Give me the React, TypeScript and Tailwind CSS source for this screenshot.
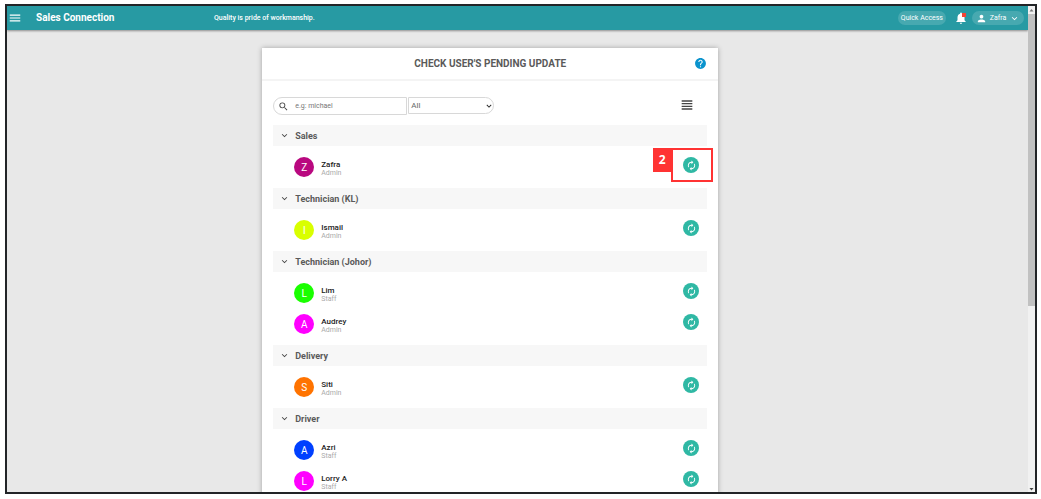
import {
  MdAutorenew,
  MdExpandMore,
  MdHelp,
  MdMenu,
  MdNotifications,
  MdPerson,
  MdSearch,
  MdViewHeadline,
} from 'react-icons/md';

const groups = [
  {
    name: 'Sales',
    members: [{ name: 'Zafra', role: 'Admin', color: 'bg-[#b9087f]', step: '2' }],
  },
  {
    name: 'Technician (KL)',
    members: [{ name: 'Ismail', role: 'Admin', color: 'bg-[#d9ff00]' }],
  },
  {
    name: 'Technician (Johor)',
    members: [
      { name: 'Lim', role: 'Staff', color: 'bg-[#1aff00]' },
      { name: 'Audrey', role: 'Admin', color: 'bg-[#ff00ff]' },
    ],
  },
  {
    name: 'Delivery',
    members: [{ name: 'Siti', role: 'Admin', color: 'bg-[#ff7300]' }],
  },
  {
    name: 'Driver',
    members: [
      { name: 'Azri', role: 'Staff', color: 'bg-[#0040ff]' },
      { name: 'Lorry A', role: 'Staff', color: 'bg-[#ff00ff]' },
    ],
  },
];

type Member = { name: string; role: string; color: string; step?: string };

function Header() {
  return (
    <header className="relative z-10 flex h-6 shrink-0 items-center bg-[#279aa3] pl-px pr-1 text-white shadow-[0_1px_2px_rgba(0,0,0,0.4)]">
      <button type="button" aria-label="Menu">
        <MdMenu size={14} />
      </button>
      <h1 className="ml-3.5 w-[178px] text-[10px] font-bold leading-3">Sales Connection</h1>
      <p className="text-[7px] font-medium leading-3">Quality is pride of workmanship.</p>
      <div className="ml-auto flex items-center">
        <button type="button" className="h-3.5 rounded-full bg-white/15 px-[3px] text-[7px] leading-3">
          Quick Access
        </button>
        <button type="button" aria-label="Notifications" className="relative ml-2">
          <MdNotifications size={14} />
          <span className="absolute right-0.5 top-0.5 size-1 bg-[#f44336]" />
        </button>
        <button
          type="button"
          className="ml-1 flex h-3.5 w-[52px] items-center justify-between rounded-full bg-white/15 px-1 text-[7px] leading-3"
        >
          <MdPerson size={11} />
          Zafra
          <MdExpandMore size={11} />
        </button>
      </div>
    </header>
  );
}

function Filters() {
  return (
    <div className="flex items-start">
      <label className="flex h-[18px] w-[134px] items-center rounded-l-full border border-[#d8d8d8] pl-1">
        <MdSearch size={11} className="shrink-0 text-[#444]" />
        <input
          type="text"
          aria-label="Search user"
          placeholder="e.g: michael"
          className="ml-1.5 w-full min-w-0 text-[7px] leading-3 outline-none placeholder:text-[#777]"
        />
      </label>
      <div className="relative ml-px">
        <select
          aria-label="Role"
          className="block h-[17px] w-[86px] appearance-none rounded-r-full border border-[#d8d8d8] pl-0.5 text-[8px] leading-3 text-[#666]"
        >
          <option>All</option>
          <option>Admin</option>
          <option>Staff</option>
        </select>
        <MdExpandMore size={10} className="pointer-events-none absolute right-0 top-1 text-[#222]" />
      </div>
      <button type="button" aria-label="List view" className="ml-auto mr-3 text-[#444]">
        <MdViewHeadline size={16} />
      </button>
    </div>
  );
}

function MemberRow({ member }: { member: Member }) {
  return (
    <li className="flex h-5 items-start pl-[21px] pr-2">
      <span className={`flex size-5 items-center justify-center rounded-full text-[10px] text-white ${member.color}`}>
        {member.name[0]}
      </span>
      <div className="ml-[7px] pt-[3px]">
        <p className="text-[8px] font-medium leading-[9px] text-[#222]">{member.name}</p>
        <p className="text-[7px] leading-[9px] text-[#aaa]">{member.role}</p>
      </div>
      <div className="relative ml-auto">
        <button
          type="button"
          aria-label={`Update ${member.name}`}
          className="flex size-4 items-center justify-center rounded-full bg-[#2fb8a4] text-white"
        >
          <MdAutorenew size={11} />
        </button>
        {/* Step marker around the action */}
        {member.step && (
          <div className="pointer-events-none absolute -left-3 -top-[9px] h-[34px] w-[42px] border-2 border-[#ff3333]">
            <span className="absolute -left-5 -top-0.5 flex h-6 w-[18px] items-center justify-center bg-[#ff3333] font-['Open_Sans',sans-serif] text-xs font-bold text-white">
              {member.step}
            </span>
          </div>
        )}
      </div>
    </li>
  );
}

function Scrollbar() {
  return (
    <div className="flex w-[7px] shrink-0 flex-col items-center bg-[#f1f1f1]">
      <svg viewBox="0 0 7 8" className="h-2 w-full shrink-0" fill="#777">
        <path d="M3.5 3 5.5 5.5h-4z" />
      </svg>
      <div className="h-3/5 w-full bg-[#c1c1c1]" />
      <svg viewBox="0 0 7 8" className="mt-auto h-2 w-full shrink-0" fill="#444">
        <path d="M3.5 6.5 5.5 4h-4z" />
      </svg>
    </div>
  );
}

export default function App() {
  return (
    <div className="h-screen bg-white pb-[5px] pl-[5px] pr-1 pt-1 font-[Roboto,sans-serif]">
      <div className="flex h-full overflow-hidden border-2 border-[#222427]">
        <div className="flex min-w-0 flex-1 flex-col overflow-hidden">
          <Header />
          <main className="min-h-0 flex-1 overflow-hidden bg-[#e8e8e8] pt-[18px]">
            <section className="ml-[25%] w-[456px] max-w-[75%] bg-white pb-6 shadow-[0_0_5px_rgba(0,0,0,0.3)]">
              <div className="grid h-[33px] grid-cols-[1fr_auto_1fr] items-center border-b-2 border-[#f4f4f4] px-[11px]">
                <h2 className="col-start-2 text-[10px] font-bold leading-3 text-[#5a5a5a]">
                  CHECK USER&apos;S PENDING UPDATE
                </h2>
                <button type="button" aria-label="Help" className="justify-self-end text-[#0a93cd]">
                  <MdHelp size={13} />
                </button>
              </div>
              <div className="px-[11px] pt-4">
                <Filters />
                <div className="mt-2.5">
                  {groups.map((group) => (
                    <div key={group.name}>
                      <button
                        type="button"
                        className="flex h-[21px] w-full items-center bg-[#f7f7f7] pl-1.5 text-[9px] font-bold leading-3 text-[#5a5a5a]"
                      >
                        <MdExpandMore size={11} className="mr-[5px] text-[#444]" />
                        {group.name}
                      </button>
                      <ul className="flex flex-col gap-[11px] py-[11px]">
                        {group.members.map((member) => (
                          <MemberRow key={member.name} member={member} />
                        ))}
                      </ul>
                    </div>
                  ))}
                </div>
              </div>
            </section>
          </main>
        </div>
        <Scrollbar />
      </div>
    </div>
  );
}
